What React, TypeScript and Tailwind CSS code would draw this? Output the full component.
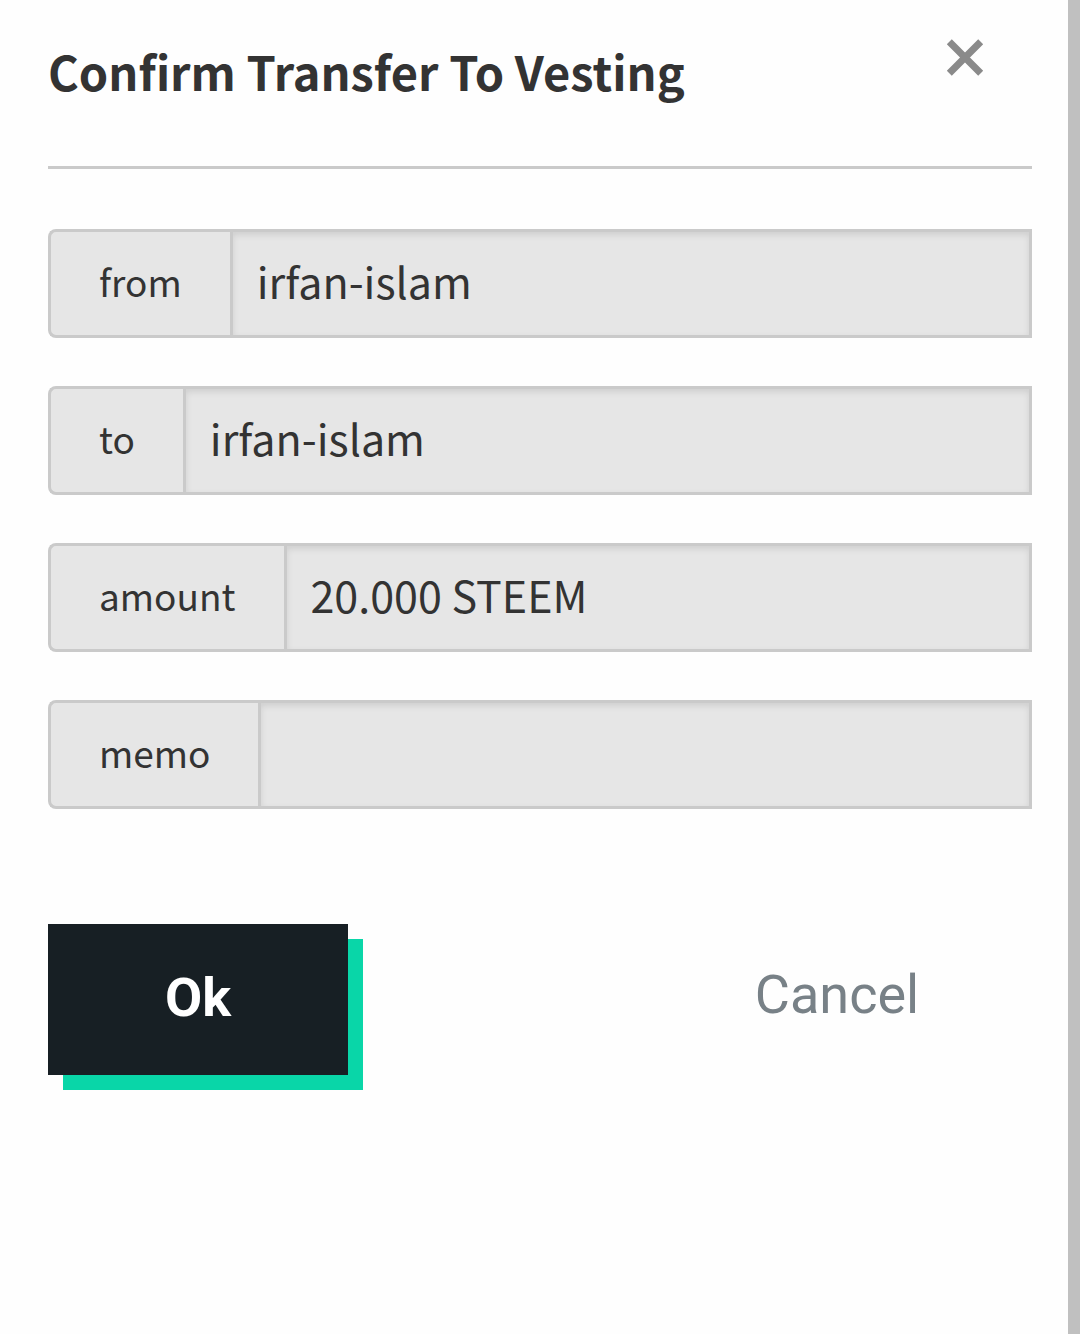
const fields = [
  { name: 'from', value: 'irfan-islam' },
  { name: 'to', value: 'irfan-islam' },
  { name: 'amount', value: '20.000 STEEM' },
  { name: 'memo', value: '' },
];

function Field({ name, value }: { name: string; value: string }) {
  return (
    <div className="flex h-[109px] items-stretch">
      <label
        htmlFor={name}
        className="flex items-center rounded-l-lg border-3 border-r-0 border-[#cacaca] bg-[#e6e6e6] px-12 pb-1 text-[37px] leading-none"
      >
        {name}
      </label>
      <input
        id={name}
        type="text"
        readOnly
        defaultValue={value}
        className="min-w-0 flex-1 border-3 border-[#cacaca] bg-[#e6e6e6] px-6 pb-1.5 text-[43px] shadow-[inset_0_3px_6px_rgba(10,10,10,0.1)] outline-none"
      />
    </div>
  );
}

export default function App() {
  return (
    <div className="flex min-h-screen bg-[#fefefe] font-['Noto_Sans_CJK_SC',sans-serif] text-[#333333]">
      <main className="min-w-0 flex-1 pl-12 pr-9">
        {/* Header */}
        <header className="flex items-start justify-between border-b-3 border-[#cacaca] pb-15 pt-9">
          <h1 className="text-[47px] font-semibold leading-[70px]">Confirm Transfer To Vesting</h1>
          <button type="button" aria-label="Close" className="mr-12 mt-[3px]">
            <svg width="38" height="38" viewBox="0 0 38 38" stroke="#8a8a8a" strokeWidth="7">
              <path d="M3.3 2.7 34.7 34.3M34.7 2.7 3.3 34.3" />
            </svg>
          </button>
        </header>

        <form className="pt-15" onSubmit={(e) => e.preventDefault()}>
          {/* Transfer details */}
          <div className="space-y-12">
            {fields.map((field) => (
              <Field key={field.name} name={field.name} value={field.value} />
            ))}
          </div>

          {/* Actions */}
          <div className="mt-[115px] flex items-start justify-between pr-[45px] font-['Roboto',sans-serif] text-[54px]">
            <button
              type="submit"
              className="h-[151px] w-[300px] bg-[#171f24] pb-1 font-bold text-white shadow-[15px_15px_0_#09d6a8]"
            >
              Ok
            </button>
            <button type="button" className="h-[151px] w-[300px] pb-2.5 text-[#788187]">
              Cancel
            </button>
          </div>
        </form>
      </main>

      {/* Scrollbar track */}
      <aside className="w-3 shrink-0 bg-[#c0c0c0]" />
    </div>
  );
}
